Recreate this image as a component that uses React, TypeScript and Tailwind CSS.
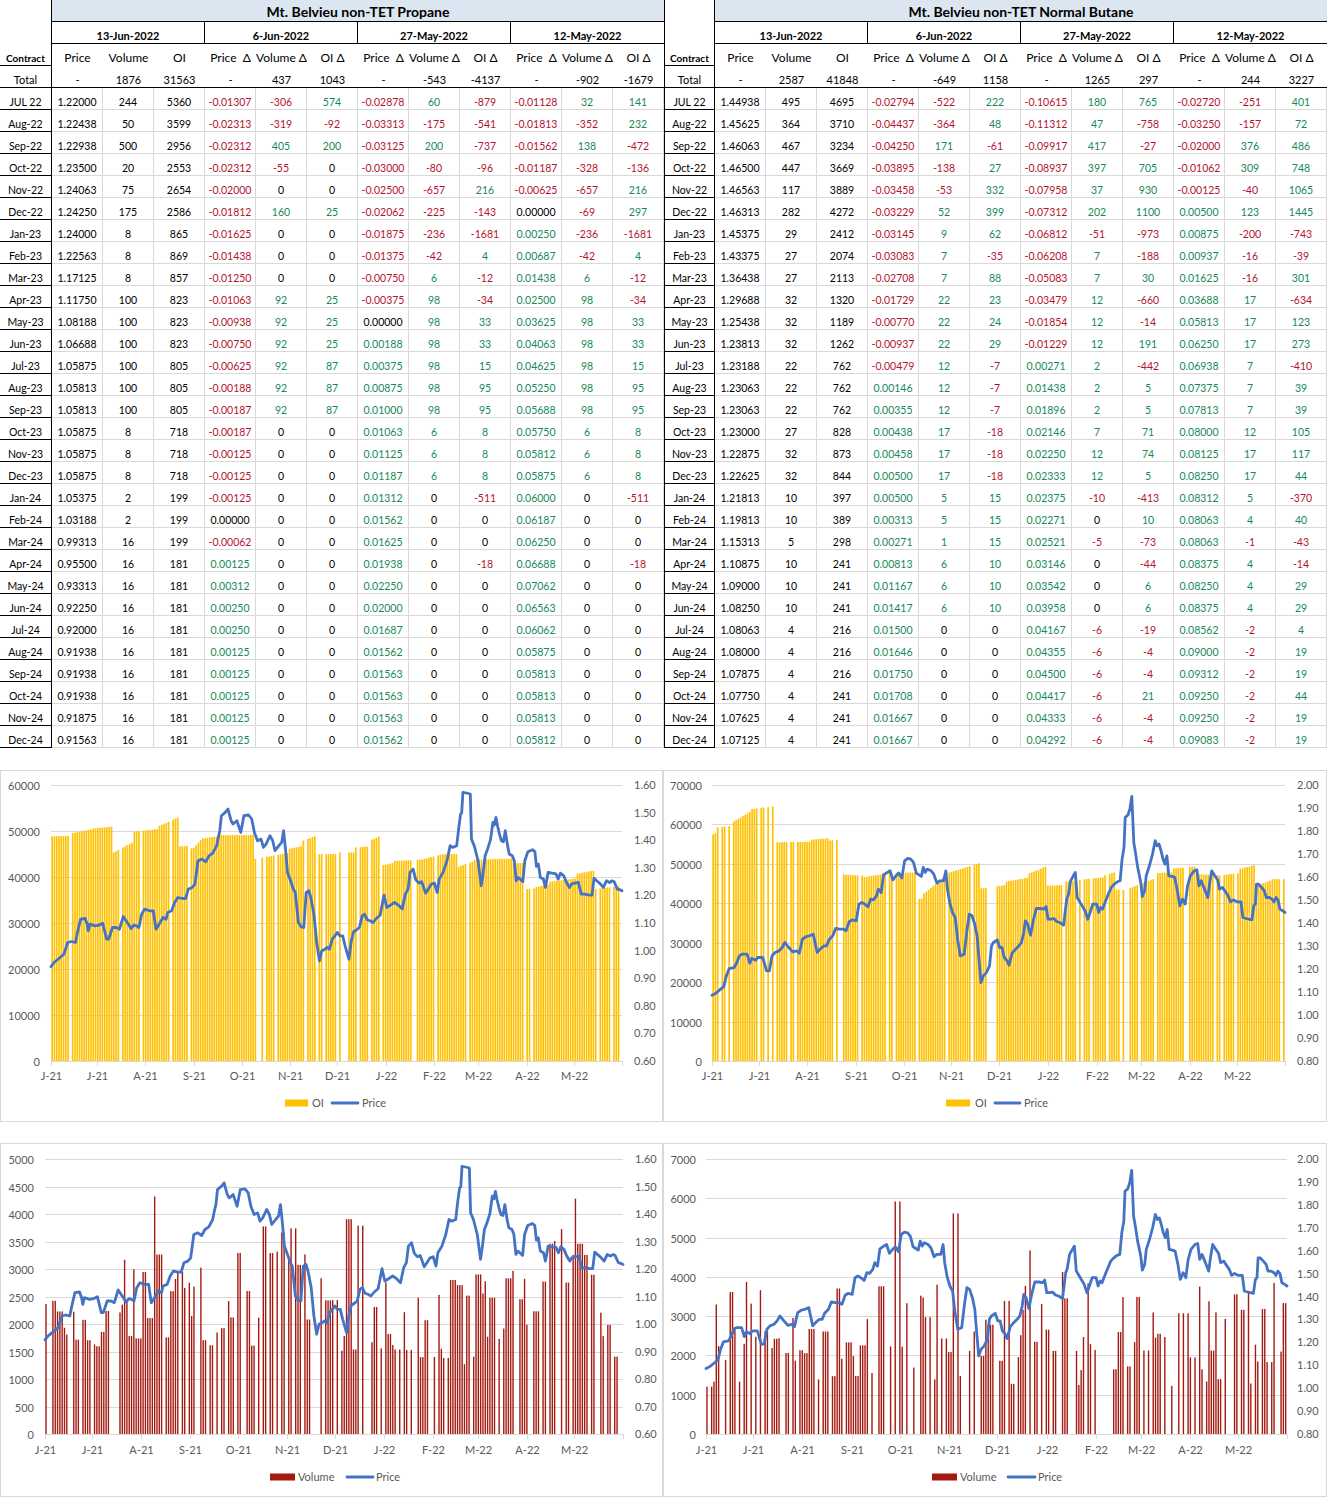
import React from 'react';

// ---------- table data ----------

const dates = ['13-Jun-2022', '6-Jun-2022', '27-May-2022', '12-May-2022'];
const headers = ['Price', 'Volume', 'OI', 'Price\u00a0 Δ', 'Volume Δ', 'OI Δ', 'Price\u00a0 Δ', 'Volume Δ', 'OI Δ', 'Price\u00a0 Δ', 'Volume Δ', 'OI Δ'];

const propaneTotal = '-,1876,31563,-,437,1043,-,-543,-4137,-,-902,-1679';
const propaneRows = [
  'JUL 22,1.22000,244,5360,-0.01307,-306,574,-0.02878,60,-879,-0.01128,32,141',
  'Aug-22,1.22438,50,3599,-0.02313,-319,-92,-0.03313,-175,-541,-0.01813,-352,232',
  'Sep-22,1.22938,500,2956,-0.02312,405,200,-0.03125,200,-737,-0.01562,138,-472',
  'Oct-22,1.23500,20,2553,-0.02312,-55,0,-0.03000,-80,-96,-0.01187,-328,-136',
  'Nov-22,1.24063,75,2654,-0.02000,0,0,-0.02500,-657,216,-0.00625,-657,216',
  'Dec-22,1.24250,175,2586,-0.01812,160,25,-0.02062,-225,-143,0.00000,-69,297',
  'Jan-23,1.24000,8,865,-0.01625,0,0,-0.01875,-236,-1681,0.00250,-236,-1681',
  'Feb-23,1.22563,8,869,-0.01438,0,0,-0.01375,-42,4,0.00687,-42,4',
  'Mar-23,1.17125,8,857,-0.01250,0,0,-0.00750,6,-12,0.01438,6,-12',
  'Apr-23,1.11750,100,823,-0.01063,92,25,-0.00375,98,-34,0.02500,98,-34',
  'May-23,1.08188,100,823,-0.00938,92,25,0.00000,98,33,0.03625,98,33',
  'Jun-23,1.06688,100,823,-0.00750,92,25,0.00188,98,33,0.04063,98,33',
  'Jul-23,1.05875,100,805,-0.00625,92,87,0.00375,98,15,0.04625,98,15',
  'Aug-23,1.05813,100,805,-0.00188,92,87,0.00875,98,95,0.05250,98,95',
  'Sep-23,1.05813,100,805,-0.00187,92,87,0.01000,98,95,0.05688,98,95',
  'Oct-23,1.05875,8,718,-0.00187,0,0,0.01063,6,8,0.05750,6,8',
  'Nov-23,1.05875,8,718,-0.00125,0,0,0.01125,6,8,0.05812,6,8',
  'Dec-23,1.05875,8,718,-0.00125,0,0,0.01187,6,8,0.05875,6,8',
  'Jan-24,1.05375,2,199,-0.00125,0,0,0.01312,0,-511,0.06000,0,-511',
  'Feb-24,1.03188,2,199,0.00000,0,0,0.01562,0,0,0.06187,0,0',
  'Mar-24,0.99313,16,199,-0.00062,0,0,0.01625,0,0,0.06250,0,0',
  'Apr-24,0.95500,16,181,0.00125,0,0,0.01938,0,-18,0.06688,0,-18',
  'May-24,0.93313,16,181,0.00312,0,0,0.02250,0,0,0.07062,0,0',
  'Jun-24,0.92250,16,181,0.00250,0,0,0.02000,0,0,0.06563,0,0',
  'Jul-24,0.92000,16,181,0.00250,0,0,0.01687,0,0,0.06062,0,0',
  'Aug-24,0.91938,16,181,0.00125,0,0,0.01562,0,0,0.05875,0,0',
  'Sep-24,0.91938,16,181,0.00125,0,0,0.01563,0,0,0.05813,0,0',
  'Oct-24,0.91938,16,181,0.00125,0,0,0.01563,0,0,0.05813,0,0',
  'Nov-24,0.91875,16,181,0.00125,0,0,0.01563,0,0,0.05813,0,0',
  'Dec-24,0.91563,16,181,0.00125,0,0,0.01562,0,0,0.05812,0,0',
];

const butaneTotal = '-,2587,41848,-,-649,1158,-,1265,297,-,244,3227';
const butaneRows = [
  'JUL 22,1.44938,495,4695,-0.02794,-522,222,-0.10615,180,765,-0.02720,-251,401',
  'Aug-22,1.45625,364,3710,-0.04437,-364,48,-0.11312,47,-758,-0.03250,-157,72',
  'Sep-22,1.46063,467,3234,-0.04250,171,-61,-0.09917,417,-27,-0.02000,376,486',
  'Oct-22,1.46500,447,3669,-0.03895,-138,27,-0.08937,397,705,-0.01062,309,748',
  'Nov-22,1.46563,117,3889,-0.03458,-53,332,-0.07958,37,930,-0.00125,-40,1065',
  'Dec-22,1.46313,282,4272,-0.03229,52,399,-0.07312,202,1100,0.00500,123,1445',
  'Jan-23,1.45375,29,2412,-0.03145,9,62,-0.06812,-51,-973,0.00875,-200,-743',
  'Feb-23,1.43375,27,2074,-0.03083,7,-35,-0.06208,7,-188,0.00937,-16,-39',
  'Mar-23,1.36438,27,2113,-0.02708,7,88,-0.05083,7,30,0.01625,-16,301',
  'Apr-23,1.29688,32,1320,-0.01729,22,23,-0.03479,12,-660,0.03688,17,-634',
  'May-23,1.25438,32,1189,-0.00770,22,24,-0.01854,12,-14,0.05813,17,123',
  'Jun-23,1.23813,32,1262,-0.00937,22,29,-0.01229,12,191,0.06250,17,273',
  'Jul-23,1.23188,22,762,-0.00479,12,-7,0.00271,2,-442,0.06938,7,-410',
  'Aug-23,1.23063,22,762,0.00146,12,-7,0.01438,2,5,0.07375,7,39',
  'Sep-23,1.23063,22,762,0.00355,12,-7,0.01896,2,5,0.07813,7,39',
  'Oct-23,1.23000,27,828,0.00438,17,-18,0.02146,7,71,0.08000,12,105',
  'Nov-23,1.22875,32,873,0.00458,17,-18,0.02250,12,74,0.08125,17,117',
  'Dec-23,1.22625,32,844,0.00500,17,-18,0.02333,12,5,0.08250,17,44',
  'Jan-24,1.21813,10,397,0.00500,5,15,0.02375,-10,-413,0.08312,5,-370',
  'Feb-24,1.19813,10,389,0.00313,5,15,0.02271,0,10,0.08063,4,40',
  'Mar-24,1.15313,5,298,0.00271,1,15,0.02521,-5,-73,0.08063,-1,-43',
  'Apr-24,1.10875,10,241,0.00813,6,10,0.03146,0,-44,0.08375,4,-14',
  'May-24,1.09000,10,241,0.01167,6,10,0.03542,0,6,0.08250,4,29',
  'Jun-24,1.08250,10,241,0.01417,6,10,0.03958,0,6,0.08375,4,29',
  'Jul-24,1.08063,4,216,0.01500,0,0,0.04167,-6,-19,0.08562,-2,4',
  'Aug-24,1.08000,4,216,0.01646,0,0,0.04355,-6,-4,0.09000,-2,19',
  'Sep-24,1.07875,4,216,0.01750,0,0,0.04500,-6,-4,0.09312,-2,19',
  'Oct-24,1.07750,4,241,0.01708,0,0,0.04417,-6,21,0.09250,-2,44',
  'Nov-24,1.07625,4,241,0.01667,0,0,0.04333,-6,-4,0.09250,-2,19',
  'Dec-24,1.07125,4,241,0.01667,0,0,0.04292,-6,-4,0.09083,-2,19',
];

function deltaColor(col: number, v: string) {
  if (col < 3) return 'text-black';
  if (v.startsWith('-')) return 'text-[#b3132f]';
  if (parseFloat(v) > 0) return 'text-[#16895a]';
  return 'text-black';
}

function FuturesTable({ title, total, rows, first }: { title: string; total: string; rows: string[]; first: boolean }) {
  // Excel-style bottom aligned cells
  const cell = 'flex items-end justify-center whitespace-nowrap leading-[12px]';
  return (
    <div
      className={`grid auto-rows-[22px] text-[10.5px] text-black ${
        first ? 'grid-cols-[52px_repeat(12,51px)]' : 'grid-cols-[51px_repeat(12,51px)]'
      }`}
    >
      <div className={`row-span-2 border-r border-black ${first ? '' : 'border-l'}`} />
      <div className="col-span-12 flex items-center justify-center border-b border-black bg-[#dce6f1] pt-[2px] text-[14px] font-bold">
        {title}
      </div>
      {dates.map((d, i) => (
        <div key={d} className={`col-span-3 ${cell} border-b border-black pb-[1px] text-[11px] font-bold ${i < 3 ? 'border-r' : ''}`}>
          {d}
        </div>
      ))}

      <div className={`${cell} border-b border-r border-black pb-[1px] text-[10px] font-bold ${first ? '' : 'border-l'}`}>Contract</div>
      {headers.map((h, i) => (
        <div key={i} className={`${cell} pb-[1px] text-[12px] leading-[14px]`}>
          {h}
        </div>
      ))}

      <div className={`${cell} border-b border-r border-black pb-[1px] text-[11px] ${first ? '' : 'border-l'}`}>Total</div>
      {total.split(',').map((v, i) => (
        <div key={i} className={`${cell} border-b border-black pb-[1px] text-[11px]`}>
          {v}
        </div>
      ))}

      {rows.map((r) => {
        const [contract, ...vals] = r.split(',');
        return (
          <React.Fragment key={contract}>
            <div className={`${cell} border-b border-r border-black pb-[1px] ${first ? '' : 'border-l'}`}>{contract}</div>
            {vals.map((v, i) => (
              <div key={i} className={`${cell} border-b border-r border-[#d9d9d9] pb-[1px] ${deltaColor(i, v)}`}>
                {v}
              </div>
            ))}
          </React.Fragment>
        );
      })}
    </div>
  );
}

// ---------- chart data ----------

// price lines traced off the reference; x in 0..1 of the plot, y in 0..1 from the top
const propaneTrace = [
  52,572, 60,560, 70,550, 85,535, 95,500, 105,497, 115,500, 120,470, 128,430, 140,428, 145,445, 148,465, 152,445,
  165,450, 175,448, 185,442, 195,490, 200,490, 210,455, 220,455, 228,460, 238,422, 248,440, 258,458, 265,448,
  272,450, 278,455, 285,415, 293,400, 305,405, 315,405, 322,460, 330,445, 340,425, 348,430, 352,410, 362,405,
  370,380, 378,365, 390,368, 398,368, 405,340, 415,335, 422,325, 430,255, 440,250, 450,258, 458,240, 468,232,
  478,210, 482,185, 486,165, 490,120, 500,110, 507,100, 515,135, 520,145, 530,135, 540,170, 548,120, 560,118,
  568,130, 575,170, 583,195, 592,190, 598,215, 605,205, 615,180, 622,195, 628,225, 638,210, 645,200, 650,165,
  655,220, 660,290, 668,315, 675,340, 680,350, 688,440, 695,453, 702,455, 708,350, 715,345, 720,365, 728,415,
  735,500, 742,555, 748,525, 756,520, 762,515, 768,520, 775,490, 782,480, 788,470, 795,480, 802,480, 808,510,
  818,550, 824,495, 830,468, 838,462, 845,455, 852,420, 858,415, 865,432, 872,435, 880,440, 888,428, 898,418,
  908,358, 915,395, 925,388, 935,380, 945,388, 955,400, 963,355, 970,340, 975,290, 983,280, 990,312, 998,322,
  1005,318, 1015,352, 1022,340, 1030,325, 1038,322, 1045,350, 1050,310, 1060,290, 1070,255, 1078,210, 1085,215,
  1095,210, 1100,160, 1105,115, 1108,112, 1111,50, 1120,52, 1130,55, 1133,190, 1140,210, 1150,255, 1158,330,
  1162,300, 1168,240, 1175,218, 1182,192, 1188,140, 1192,148, 1196,125, 1200,150, 1205,175, 1210,195, 1215,198,
  1220,165, 1225,205, 1230,235, 1238,240, 1243,255, 1248,315, 1253,305, 1258,310, 1265,318, 1270,255, 1278,228,
  1290,222, 1296,228, 1300,272, 1305,265, 1310,305, 1318,310, 1323,335, 1330,290, 1340,292, 1350,294, 1356,310,
  1362,292, 1370,300, 1378,322, 1385,335, 1390,325, 1398,322, 1408,320, 1415,355, 1425,355, 1435,358, 1443,358,
  1448,308, 1455,315, 1465,325, 1472,335, 1480,315, 1488,320, 1495,315, 1500,318, 1508,340, 1515,342, 1520,345,
];

const butaneTrace = [
  48,658, 58,652, 65,645, 78,632, 85,600, 92,578, 105,575, 112,560, 118,540, 125,535, 138,535, 145,562, 150,548,
  160,553, 165,545, 178,545, 188,585, 195,585, 202,540, 210,530, 220,525, 228,515, 235,500, 245,515, 255,528,
  265,525, 272,532, 280,490, 290,482, 298,480, 308,475, 318,530, 325,520, 335,510, 342,510, 348,492, 358,480,
  365,458, 375,460, 385,460, 392,465, 400,438, 408,432, 418,435, 425,385, 432,380, 440,385, 448,393, 455,370,
  462,372, 470,360, 475,340, 482,350, 488,298, 495,292, 505,285, 512,312, 520,300, 527,292, 535,307, 542,255,
  550,248, 558,250, 565,260, 572,292, 580,298, 585,302, 590,275, 595,290, 600,280, 610,285, 617,295, 625,322,
  632,315, 642,315, 648,285, 652,340, 658,382, 665,410, 672,425, 678,490, 685,540, 695,535, 702,465, 708,415,
  715,420, 722,445, 728,480, 733,550, 738,620, 744,600, 752,590, 760,570, 765,510, 770,500, 780,492, 786,515,
  792,515, 798,545, 805,555, 810,568, 818,532, 825,522, 835,510, 842,500, 848,470, 852,435, 858,445, 865,478,
  872,435, 880,398, 890,398, 900,400, 905,392, 910,430, 918,430, 925,428, 932,437, 940,440, 950,448, 958,370,
  962,358, 968,315, 975,300, 980,290, 985,365, 995,385, 1005,405, 1012,430, 1018,410, 1025,385, 1035,385,
  1040,410, 1045,395, 1050,400, 1058,375, 1065,355, 1072,335, 1080,325, 1088,318, 1095,315, 1100,250, 1105,215,
  1108,125, 1115,118, 1120,100, 1125,62, 1130,200, 1135,235, 1140,275, 1148,320, 1152,362, 1158,345, 1162,300,
  1170,270, 1178,235, 1185,195, 1190,210, 1195,205, 1200,225, 1205,250, 1210,265, 1215,240, 1220,300, 1228,302,
  1235,305, 1242,345, 1248,390, 1255,370, 1262,385, 1268,330, 1275,300, 1285,285, 1292,282, 1297,330, 1303,315,
  1310,335, 1320,365, 1325,320, 1330,285, 1338,300, 1345,312, 1350,340, 1358,335, 1365,348, 1372,360, 1378,378,
  1385,372, 1395,378, 1405,378, 1410,425, 1418,428, 1425,430, 1433,432, 1438,390, 1442,385, 1445,325, 1450,325,
  1458,335, 1465,345, 1470,365, 1478,365, 1485,370, 1490,378, 1495,365, 1500,372, 1505,400, 1512,405, 1518,410,
];

function toLine(trace: number[], x0: number, x1: number): [number, number][] {
  const out: [number, number][] = [];
  for (let i = 0; i < trace.length; i += 2) out.push([(trace[i] - x0) / (x1 - x0), (trace[i + 1] - 28) / 827]);
  return out;
}

// open interest steps: [x from, x to, y from, y to] in the same traced space
const propaneOI = [
  [52,105,182,180], [108,160,172,160], [162,208,158,153], [210,262,232,200], [262,330,168,160], [333,378,150,125],
  [380,412,212,210], [418,440,218,188], [445,472,188,183], [478,572,178,178], [575,660,250,232], [662,700,220,210],
  [700,738,195,178], [740,785,235,235], [785,832,230,230], [840,868,215,212], [870,905,195,178], [908,930,268,262],
  [930,1000,256,252], [1003,1060,252,235], [1060,1092,235,235], [1095,1135,275,258], [1138,1245,252,248],
  [1245,1268,262,262], [1270,1295,340,338], [1295,1335,335,325], [1335,1400,318,308], [1400,1445,295,285],
  [1448,1520,340,330],
];

const butaneOI = [
  [48,60,178,170], [60,100,155,150], [100,150,140,105], [150,205,100,92], [205,300,200,198], [300,345,192,188],
  [345,375,195,192], [375,435,295,300], [435,485,305,295], [485,570,292,290], [570,590,370,368], [590,650,355,298],
  [652,735,292,262], [738,800,338,328], [800,862,318,305], [865,905,292,272], [908,945,330,328], [948,990,318,315],
  [990,1052,312,305], [1052,1085,300,288], [1090,1112,342,342], [1118,1180,338,310], [1180,1230,292,290],
  [1232,1290,278,272], [1290,1345,295,298], [1345,1400,300,292], [1400,1440,280,268], [1442,1480,330,315],
  [1482,1520,310,310],
];

const N = 250;

function rng(seed: number) {
  let s = seed;
  return () => {
    s = (s * 1664525 + 1013904223) % 4294967296;
    return s / 4294967296;
  };
}

function oiBars(segs: number[][], x0: number, x1: number, seed: number) {
  const r = rng(seed);
  return Array.from({ length: N }, (_, i) => {
    const zx = x0 + ((i + 0.5) / N) * (x1 - x0);
    let seg = segs.find((s) => zx >= s[0] && zx <= s[1]);
    if (!seg) {
      seg = segs.reduce((a, b) => (Math.abs((a[0] + a[1]) / 2 - zx) < Math.abs((b[0] + b[1]) / 2 - zx) ? a : b));
    }
    const k = Math.min(1, Math.max(0, (zx - seg[0]) / (seg[1] - seg[0])));
    const zy = seg[2] + (seg[3] - seg[2]) * k;
    return r() < 0.14 ? null : (855 - zy) / 827;
  });
}

function volBars(seed: number, max: number, level: (t: number) => [number, number], spike: [number, number], spikeP: number) {
  const r = rng(seed);
  const out: (number | null)[] = [];
  let v = 0;
  let run = 0;
  for (let i = 0; i < N; i++) {
    if (run <= 0) {
      const [mean, spread] = level(i / N);
      v = r() < spikeP ? spike[0] + r() * (spike[1] - spike[0]) : mean + (r() * 2 - 1) * spread;
      run = 1 + Math.floor(r() * 3);
    }
    run--;
    out.push(r() < 0.3 ? null : Math.max(200, v) / max);
  }
  return out;
}

const propaneVol = volBars(7, 5000, (t) => {
  if (t < 0.13) return [1950, 500];
  if (t < 0.37) return [2500, 900];
  if (t < 0.45) return [3400, 500];
  if (t < 0.85) return [2100, 900];
  if (t < 0.95) return [3300, 600];
  return [1800, 600];
}, [3700, 4400], 0.04);

const butaneVol = volBars(19, 7000, (t) => {
  if (t > 0.55 && t < 0.62) return [3400, 1300];
  return [2600, 1400];
}, [4600, 6000], 0.03);

const tickFrac = [0, 0.0812, 0.1654, 0.2513, 0.3346, 0.4179, 0.5012, 0.5871, 0.6715, 0.7484, 0.8335, 0.9159, 1];
const monthLabels = ['J-21', 'J-21', 'A-21', 'S-21', 'O-21', 'N-21', 'D-21', 'J-22', 'F-22', 'M-22', 'A-22', 'M-22'];

type ChartSpec = {
  plot: [number, number, number, number];
  leftTicks: string[];
  leftX: number;
  rightTicks: string[];
  rightX: number;
  labelY: number;
  bars: (number | null)[];
  barColor: string;
  barFill: number;
  line: [number, number][];
  legendY: number;
  barLegend: { label: string; rect: [number, number]; textX: number };
  lineLegend: [number, number, number];
};

function steps(from: number, to: number, step: number, dec: number) {
  const out: string[] = [];
  const n = Math.round((from - to) / step);
  for (let i = 0; i <= n; i++) out.push((from - i * step).toFixed(dec));
  return out;
}

function Chart({ c }: { c: ChartSpec }) {
  const [L, R, T, B] = c.plot;
  const w = R - L;
  const h = B - T;
  const pitch = w / c.bars.length;
  const pts = c.line.map(([x, y]) => `${(L + x * w).toFixed(1)},${(T + y * h).toFixed(1)}`).join(' ');
  return (
    <div className="h-full border border-[#d9d9d9] bg-white">
      <svg width="100%" height="100%" className="block" fontSize="11" fill="#595959">
        {c.leftTicks.map((lab, i) => {
          const y = Math.round(T + (i * h) / (c.leftTicks.length - 1)) + 0.5;
          return (
            <g key={lab}>
              <line x1={L} x2={R} y1={y} y2={y} stroke="#d9d9d9" strokeWidth="1" />
              <text x={c.leftX} y={y + 4} textAnchor="end">
                {lab}
              </text>
            </g>
          );
        })}
        {c.rightTicks.map((lab, i) => (
          <text key={lab} x={c.rightX} y={T + (i * h) / (c.rightTicks.length - 1) + 4}>
            {lab}
          </text>
        ))}
        {c.bars.map((v, i) =>
          v == null ? null : (
            <rect key={i} x={L + i * pitch + 0.3} y={B - v * h} width={pitch * c.barFill} height={v * h} fill={c.barColor} />
          ),
        )}
        {tickFrac.map((f, i) => {
          const x = Math.round(L + f * w) + 0.5;
          return (
            <g key={i}>
              <line x1={x} x2={x} y1={B} y2={B + 5} stroke="#d9d9d9" />
              {monthLabels[i] && (
                <text x={x} y={c.labelY} textAnchor="middle">
                  {monthLabels[i]}
                </text>
              )}
            </g>
          );
        })}
        <line x1={L} x2={R} y1={B + 0.5} y2={B + 0.5} stroke="#d9d9d9" />
        <polyline points={pts} fill="none" stroke="#4472c4" strokeWidth="2.8" strokeLinejoin="round" strokeLinecap="round" />
        <rect x={c.barLegend.rect[0]} y={c.legendY - 3.5} width={c.barLegend.rect[1] - c.barLegend.rect[0]} height="7" fill={c.barColor} />
        <text x={c.barLegend.textX} y={c.legendY + 4}>
          {c.barLegend.label}
        </text>
        <line x1={c.lineLegend[0]} x2={c.lineLegend[1]} y1={c.legendY} y2={c.legendY} stroke="#4472c4" strokeWidth="2.8" strokeLinecap="round" />
        <text x={c.lineLegend[2]} y={c.legendY + 4}>
          Price
        </text>
      </svg>
    </div>
  );
}

const propaneLine = toLine(propaneTrace, 52, 1520);
const butaneLine = toLine(butaneTrace, 48, 1518);

const charts: ChartSpec[] = [
  {
    plot: [50, 621, 14, 290],
    leftTicks: steps(60000, 0, 10000, 0),
    leftX: 39,
    rightTicks: steps(1.6, 0.6, 0.1, 2),
    rightX: 633,
    labelY: 309,
    bars: oiBars(propaneOI, 52, 1520, 3),
    barColor: '#ffc000',
    barFill: 0.72,
    line: propaneLine,
    legendY: 332,
    barLegend: { label: 'OI', rect: [284, 307], textX: 311 },
    lineLegend: [331, 357, 361],
  },
  {
    plot: [48, 621, 14, 290],
    leftTicks: steps(70000, 0, 10000, 0),
    leftX: 38,
    rightTicks: steps(2.0, 0.8, 0.1, 2),
    rightX: 633,
    labelY: 309,
    bars: oiBars(butaneOI, 48, 1518, 11),
    barColor: '#ffc000',
    barFill: 0.72,
    line: butaneLine,
    legendY: 332,
    barLegend: { label: 'OI', rect: [282, 306], textX: 311 },
    lineLegend: [331, 356, 360],
  },
  {
    plot: [44, 622, 15, 290],
    leftTicks: steps(5000, 0, 500, 0),
    leftX: 33,
    rightTicks: steps(1.6, 0.6, 0.1, 2),
    rightX: 634,
    labelY: 310,
    bars: propaneVol,
    barColor: '#a31a10',
    barFill: 0.6,
    line: propaneLine,
    legendY: 333,
    barLegend: { label: 'Volume', rect: [269, 294], textX: 297 },
    lineLegend: [346, 372, 375],
  },
  {
    plot: [42, 623, 15, 290],
    leftTicks: steps(7000, 0, 1000, 0),
    leftX: 32,
    rightTicks: steps(2.0, 0.8, 0.1, 2),
    rightX: 633,
    labelY: 310,
    bars: butaneVol,
    barColor: '#a31a10',
    barFill: 0.6,
    line: butaneLine,
    legendY: 333,
    barLegend: { label: 'Volume', rect: [268, 293], textX: 296 },
    lineLegend: [344, 371, 374],
  },
];

export default function App() {
  return (
    <div className="w-[1327px] bg-white font-[family-name:Lato,'Liberation_Sans',sans-serif]">
      <div className="flex">
        <FuturesTable title="Mt. Belvieu non-TET Propane" total={propaneTotal} rows={propaneRows} first />
        <FuturesTable title="Mt. Belvieu non-TET Normal Butane" total={butaneTotal} rows={butaneRows} first={false} />
      </div>
      <div className="mt-[22px] grid grid-cols-[663px_664px] grid-rows-[352px_354px] gap-y-[21px]">
        {charts.map((c, i) => (
          <Chart key={i} c={c} />
        ))}
      </div>
    </div>
  );
}
